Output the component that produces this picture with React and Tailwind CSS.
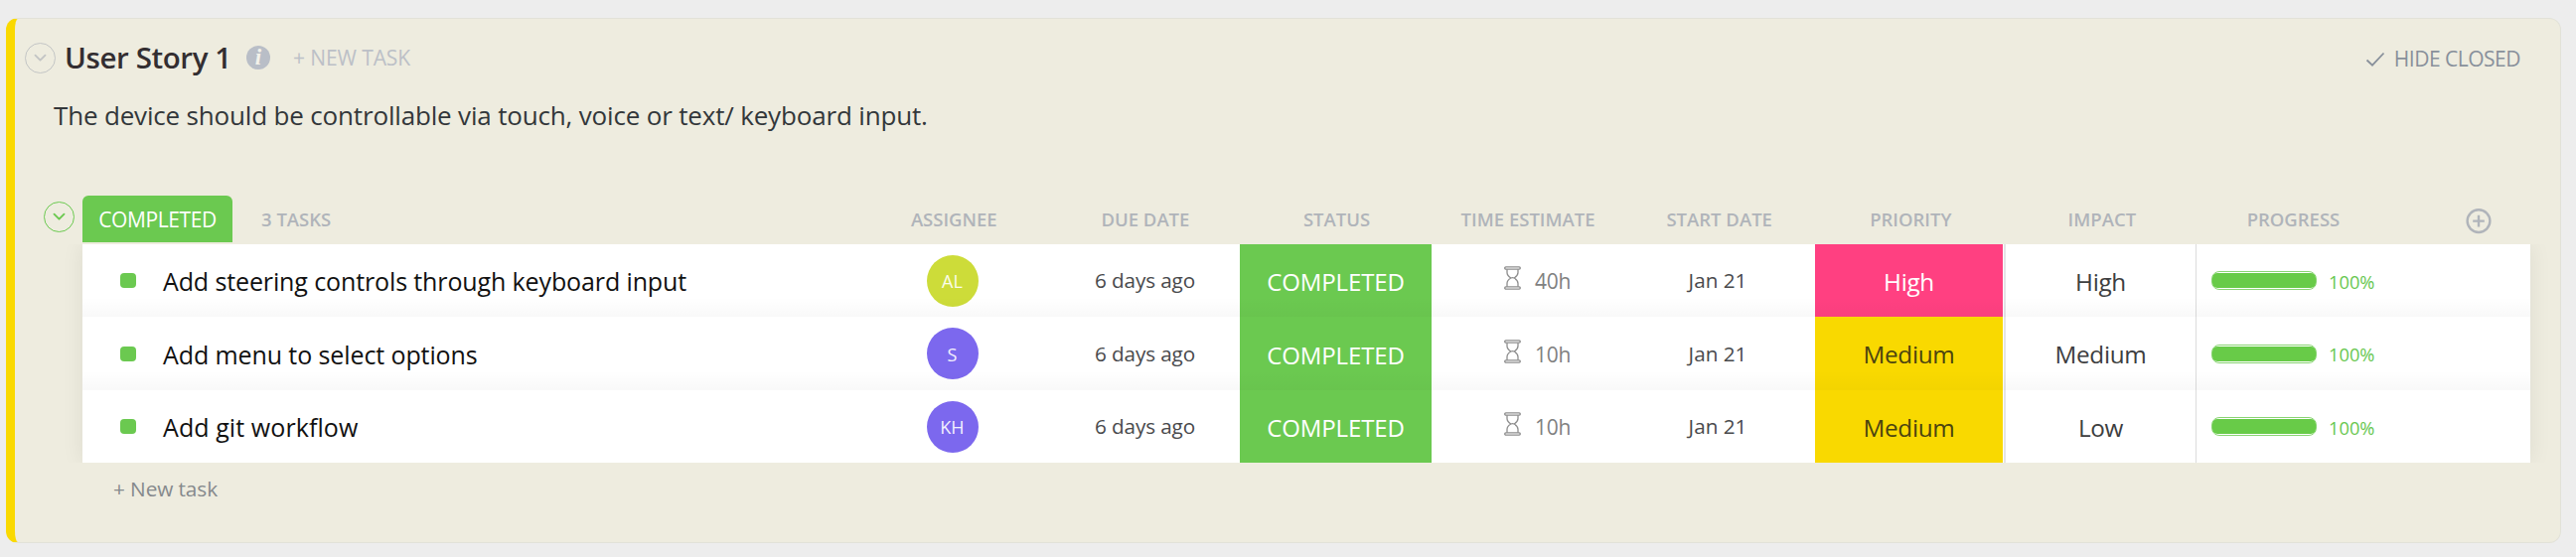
import React from "react";

const HEADERS = ["ASSIGNEE", "DUE DATE", "STATUS", "TIME ESTIMATE", "START DATE", "PRIORITY", "IMPACT", "PROGRESS"];

const TASKS = [
  {
    name: "Add steering controls through keyboard input",
    nameClass: "tracking-[-0.12px]",
    height: "h-[73px]",
    initials: "AL",
    avatar: "bg-[#cddc39]",
    estimate: "40h",
    priority: "High",
    priorityClass: "bg-[#ff4081] text-white",
    impact: "High",
  },
  {
    name: "Add menu to select options",
    nameClass: "tracking-[-0.1px]",
    height: "h-[74px]",
    initials: "S",
    avatar: "bg-[#7c68ee]",
    estimate: "10h",
    priority: "Medium",
    priorityClass: "bg-[#f9d900] text-[#4b4410]",
    impact: "Medium",
  },
  {
    name: "Add git workflow",
    nameClass: "tracking-[0.08px]",
    height: "h-[73px]",
    initials: "KH",
    avatar: "bg-[#7c68ee]",
    estimate: "10h",
    priority: "Medium",
    priorityClass: "bg-[#f9d900] text-[#4b4410]",
    impact: "Low",
  },
];

function CollapseCircle({ className }) {
  return (
    <svg className={className} width="31" height="31" viewBox="0 0 31 31" fill="none" stroke="currentColor">
      <circle cx="15.5" cy="15.5" r="15" strokeWidth="1" />
      <path d="M10.5 12.7l5 5 5-5" strokeWidth="1.9" strokeLinecap="round" strokeLinejoin="round" />
    </svg>
  );
}

function InfoIcon() {
  return (
    <span className="flex size-6 shrink-0 items-center justify-center rounded-full bg-[#b9bec7] font-['Liberation_Serif',serif] text-[23px] leading-6 font-bold text-[#f3f2ea] italic">
      i
    </span>
  );
}

function Hourglass() {
  return (
    <svg width="17" height="24" viewBox="0 0 17 24" fill="none" stroke="#8d8d8d" strokeWidth="1.3">
      <rect x="0.7" y="0.8" width="15.6" height="2.3" rx="1.1" />
      <rect x="0.7" y="20.9" width="15.6" height="2.3" rx="1.1" />
      <path d="M3 3.2v3.4c0 3 1.8 4.2 3.9 5.4C4.8 13.2 3 14.4 3 17.4v3.4M14 3.2v3.4c0 3-1.8 4.2-3.9 5.4 2.1 1.2 3.9 2.4 3.9 5.4v3.4M6.9 12c.9-.5 2.3-.5 3.2 0" />
    </svg>
  );
}

function TaskRow({ task, last }) {
  return (
    <div
      className={`relative grid w-full grid-cols-[779px_193px_193px_193px_193px_193px_193px_190px_1fr] bg-white ${task.height} ${
        last ? "" : "after:absolute after:inset-x-0 after:bottom-0 after:h-5 after:bg-linear-to-b after:from-transparent after:to-black/[0.025]"
      }`}
    >
      <div className="flex items-center pl-[38px]">
        <span className="h-[15px] w-4 rounded-[4px] bg-[#6bc950]" />
        <span className={`pt-[3px] pl-[27px] text-[25px] text-[#111] ${task.nameClass}`}>{task.name}</span>
      </div>
      <div className="flex items-center justify-center">
        <span className={`flex size-[52px] items-center justify-center rounded-full pt-0.5 text-[18px] text-white/90 ${task.avatar}`}>
          {task.initials}
        </span>
      </div>
      <div className="flex items-center justify-center pt-px pl-0.5 text-[20.7px] tracking-[-0.1px] text-[#48494c]">6 days ago</div>
      <div className="flex items-center justify-center bg-[#6bc950] pt-[3px] text-[24px] tracking-[-0.1px] text-white">COMPLETED</div>
      <div className="flex items-center pl-[73px] text-[21px] tracking-[-0.3px] text-[#808080]">
        <span className="pb-[5px]">
          <Hourglass />
        </span>
        <span className="w-[50px] pt-[3px] text-right">{task.estimate}</span>
      </div>
      <div className="flex items-center justify-center pt-px pr-[3px] text-[20.7px] text-[#48494c]">Jan 21</div>
      <div className="flex">
        <div className={`flex w-[189px] items-center justify-center pt-[3px] text-[24.3px] tracking-[-0.3px] ${task.priorityClass}`}>
          {task.priority}
        </div>
        <div className="ml-px w-0.5 bg-[#e4e4e6]" />
      </div>
      <div className="flex items-center justify-center pt-[3px] pr-px text-[24.3px] tracking-[-0.3px] text-[#3d3e40]">{task.impact}</div>
      <div className="flex items-center border-l border-[#dcdcdc] pl-[15px]">
        <div className="h-[19px] w-[106px] rounded-lg border border-[#6bc950]/80 py-px">
          <div className="size-full rounded-[5px] bg-[#68cb48]" />
        </div>
        <span className="pt-0.5 pl-3 text-[18.3px] text-[#68c750]">100%</span>
      </div>
    </div>
  );
}

export default function App() {
  return (
    <div className="h-[561px] w-full overflow-hidden bg-[#ededed] pt-[18px] pl-1.5 font-['Open_Sans','Noto_Sans',sans-serif] whitespace-nowrap">
      <section className="h-[529px] w-[2572px] rounded-[12px] border border-l-[9px] border-[#e2e2d8] border-l-[#fad900] bg-[#eeecdf]">
        <header className="mt-5 flex h-[38px] items-center pr-10 pl-2.5">
          <CollapseCircle className="shrink-0 text-[#c3c5c5]" />
          <h1 className="w-48 pt-px pl-[9px] text-[29.5px] font-semibold tracking-[-0.4px] text-[#332e31]">User Story 1</h1>
          <InfoIcon />
          <span className="pt-px pl-[23px] text-[21px] tracking-[-0.1px] text-[#bcc0c7]">+ NEW TASK</span>
          <div className="mt-[3px] ml-auto flex items-center gap-[9px] text-[#88909b]">
            <svg width="20" height="16" viewBox="0 0 20 16" fill="none" stroke="currentColor" strokeWidth="1.8">
              <path d="M1.5 8.5l5.5 5.2L18.5 1.5" />
            </svg>
            <span className="pt-px text-[21px] tracking-[-0.5px]">HIDE CLOSED</span>
          </div>
        </header>

        <p className="mt-[19px] h-10 pl-[39px] text-[26px] leading-10 tracking-[-0.17px] text-[#33373a]">
          The device should be controllable via touch, voice or text/ keyboard input.
        </p>

        <div className="mt-[61px] flex pl-[29px]">
          <CollapseCircle className="mt-1.5 shrink-0 text-[#6bc950]" />
          <div className="ml-2 w-[2464px]">
            <div className="grid h-[49px] grid-cols-[781px_repeat(8,192.6px)_1fr] text-[18.5px] font-semibold text-[#b0b4ba]">
              <div className="flex">
                <span className="flex h-[47px] w-[151px] items-center justify-center rounded-t-[6px] bg-[#6bc950] pt-[3px] text-[21px] font-normal tracking-[-0.4px] text-white">
                  COMPLETED
                </span>
                <span className="pl-[29px] leading-[48px]">3 TASKS</span>
              </div>
              {HEADERS.map((h) => (
                <span key={h} className="text-center leading-[48px]">
                  {h}
                </span>
              ))}
              <div className="pt-[13px] pl-[77px]">
                <svg width="26" height="26" viewBox="0 0 26 26" fill="none" stroke="#b0b4ba" strokeWidth="2.4">
                  <circle cx="13" cy="12.6" r="11.4" />
                  <path d="M13 6.8v11.6M7.2 12.6h11.6" />
                </svg>
              </div>
            </div>
            <div className="shadow-[0_0_22px_rgba(0,0,0,0.07)] [clip-path:inset(0_-22px)]">
              {TASKS.map((t, i) => (
                <TaskRow key={t.name} task={t} last={i === TASKS.length - 1} />
              ))}
            </div>
            <div className="pt-[11px] pl-[31px] text-[20.8px] tracking-[-0.1px] text-[#85898c]">+ New task</div>
          </div>
        </div>
      </section>
    </div>
  );
}
